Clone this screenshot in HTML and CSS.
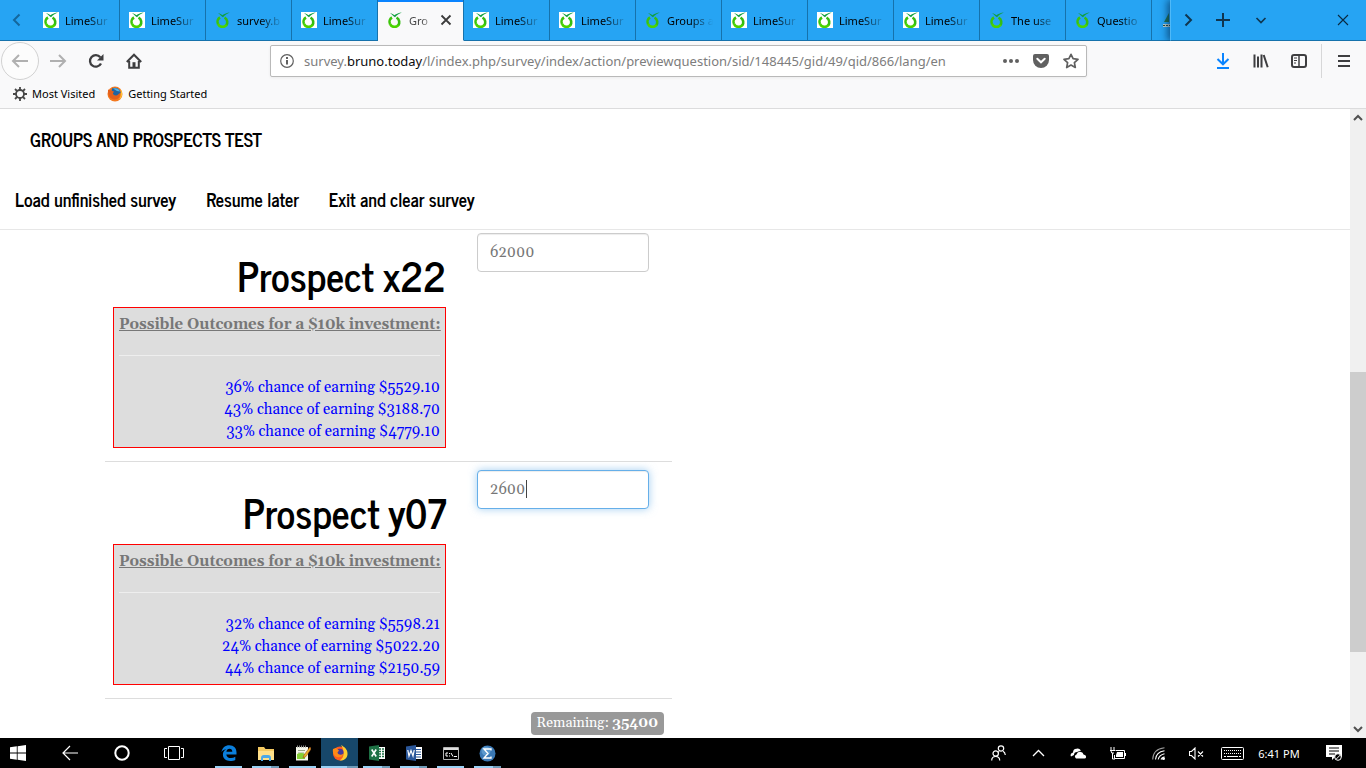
FILE: index.html
```html
<!DOCTYPE html>
<html lang="en">
<head>
<meta charset="utf-8">
<title>Groups and Prospects Test</title>
<link rel="stylesheet" href="styles.css">
</head>
<body>
<svg class="defs" aria-hidden="true">
  <symbol id="lime" viewBox="0 0 16 16">
    <path d="M9.500 5.700a5 5 0 0 1 1.600 7.700" fill="none" stroke="#35bd12" stroke-width="2.600"/>
    <path d="M11.600 12.700a5 5 0 0 1-8.600-.7" fill="none" stroke="#4ad400" stroke-width="2.800"/>
    <path d="M3 12a5 5 0 0 1 2-6.500" fill="none" stroke="#3cc40a" stroke-width="2.600"/>
    <path d="M3 1.200C5 1.400 6.200 2 7.300 3.200 9.400 1.600 12 .7 14.800.4 12 1.600 9.800 3 8 5.200 6.500 4.800 5.400 2.400 3 1.200z" fill="#0f9f3f"/>
  </symbol>
  <symbol id="firefox" viewBox="0 0 16 16">
    <circle cx="8" cy="8" r="7.500" fill="#f4791f"/>
    <path d="M5 2.500A6 6 0 0 1 13.800 6.500L11 10 7 9.500 4.500 6z" fill="#23649f"/>
    <path d="M6 2.500c3-1 6 0 7 3l-3-.5z" fill="#4fb3e8"/>
    <path d="M1 3.500 4 4.500 7 5.500 5.800 7.500c.2 2 3.200 3 5 1.200l2-1.700c1 3-1.300 6.500-5 6.500C3.500 13.500.5 10 1 3.500z" fill="#e4601b"/>
    <path d="M13.500 3c2.500 4 1.800 8.500-1.500 10.800 2.400-3.300 2.200-6.600 1.500-10.800z" fill="#ffd23a"/>
  </symbol>
</svg>

<header class="browser">
  <div class="tabstrip">
    <button class="scroll-left" aria-label="Scroll tabs left"><svg width="16" height="16" viewBox="0 0 16 16"><path d="M10.500 2.500 5 8l5.500 5.500" fill="none" stroke="#14679c" stroke-width="2"/></svg></button>
    <div class="tabs">
      <button class="tab"><svg class="fav boxed"><use href="#lime"/></svg><span class="tab-title">LimeSur</span></button>
      <button class="tab"><svg class="fav boxed"><use href="#lime"/></svg><span class="tab-title">LimeSur</span></button>
      <button class="tab"><svg class="fav"><use href="#lime"/></svg><span class="tab-title">survey.b</span></button>
      <button class="tab"><svg class="fav boxed"><use href="#lime"/></svg><span class="tab-title">LimeSur</span></button>
      <button class="tab active"><svg class="fav"><use href="#lime"/></svg><span class="tab-title">Gro</span><svg class="tab-close" viewBox="0 0 12 12"><path d="M1.500 1.500l9 9m0-9l-9 9" stroke="#3c3c3c" stroke-width="1.800"/></svg></button>
      <button class="tab"><svg class="fav boxed"><use href="#lime"/></svg><span class="tab-title">LimeSur</span></button>
      <button class="tab"><svg class="fav boxed"><use href="#lime"/></svg><span class="tab-title">LimeSur</span></button>
      <button class="tab"><svg class="fav"><use href="#lime"/></svg><span class="tab-title">Groups a</span></button>
      <button class="tab"><svg class="fav boxed"><use href="#lime"/></svg><span class="tab-title">LimeSur</span></button>
      <button class="tab"><svg class="fav boxed"><use href="#lime"/></svg><span class="tab-title">LimeSur</span></button>
      <button class="tab"><svg class="fav boxed"><use href="#lime"/></svg><span class="tab-title">LimeSur</span></button>
      <button class="tab"><svg class="fav"><use href="#lime"/></svg><span class="tab-title">The use</span></button>
      <button class="tab"><svg class="fav"><use href="#lime"/></svg><span class="tab-title">Questio</span></button>
      <button class="tab" aria-label="Tab"><svg class="fav" viewBox="0 0 16 16"><path d="M3 10 8 1v9z" fill="#23704a"/><path d="M2 12h13v3H2z" fill="#c9d6d0"/><path d="M2 13.500h13" stroke="#274b3c" stroke-dasharray="2 1"/></svg></button>
    </div>
    <div class="tab-tools">
      <button class="tool scroll-right" aria-label="Scroll tabs right"><svg width="16" height="16" viewBox="0 0 16 16"><path d="M5.500 2.500 11 8l-5.500 5.500" fill="none" stroke="#10364f" stroke-width="2"/></svg></button>
      <button class="tool" aria-label="New tab"><svg width="16" height="16" viewBox="0 0 16 16"><path d="M8 1v14M1 8h14" stroke="#10364f" stroke-width="2"/></svg></button>
      <button class="tool" aria-label="List all tabs"><svg width="12" height="12" viewBox="0 0 12 12"><path d="M1.500 4 6 8.500 10.500 4" fill="none" stroke="#10364f" stroke-width="1.700"/></svg></button>
      <button class="tool window-close" aria-label="Close window"><svg width="12" height="12" viewBox="0 0 12 12"><path d="M1 1l10 10M11 1 1 11" stroke="#0a2a40" stroke-width="1.100"/></svg></button>
    </div>
  </div>

  <div class="navbar">
    <button class="nav-btn back" aria-label="Back"><svg width="18" height="16" viewBox="0 0 18 16"><path d="M17 8H2M8 2 2 8l6 6" fill="none" stroke="#b0b0b0" stroke-width="2"/></svg></button>
    <button class="nav-btn" aria-label="Forward"><svg width="18" height="16" viewBox="0 0 18 16"><path d="M1 8h15M10 2l6 6-6 6" fill="none" stroke="#b0b0b0" stroke-width="2"/></svg></button>
    <button class="nav-btn" aria-label="Reload"><svg width="16" height="16" viewBox="0 0 16 16"><path d="M13 10.500A5.800 5.800 0 1 1 12.300 4.200" fill="none" stroke="#3e3e40" stroke-width="2.300"/><path d="M15.500 1v6.500H9z" fill="#3e3e40"/></svg></button>
    <button class="nav-btn" aria-label="Home"><svg width="16" height="16" viewBox="0 0 16 16"><path d="M.8 9 8 1.700 15.200 9M3.200 8v6.700h9.600V8" fill="none" stroke="#3e3e40" stroke-width="2"/><path d="M6.500 14V9.200h3V14z" fill="#3e3e40"/></svg></button>
    <div class="urlbar">
      <svg width="16" height="16" viewBox="0 0 16 16"><circle cx="8" cy="8" r="6.300" fill="none" stroke="#606060" stroke-width="1.200"/><path d="M7 7h2v4.500H7zM7 4h2v2H7z" fill="#606060"/></svg>
      <div class="url" role="textbox" contenteditable="true" aria-label="Address">survey.<b class="host">bruno.today</b>/l/index.php/survey/index/action/previewquestion/sid/148445/gid/49/qid/866/lang/en</div>
      <button class="url-btn" aria-label="Page actions"><svg width="16" height="16" viewBox="0 0 16 16"><circle cx="2" cy="8" r="2" fill="#606060"/><circle cx="8" cy="8" r="2" fill="#606060"/><circle cx="14" cy="8" r="2" fill="#606060"/></svg></button>
      <button class="url-btn" aria-label="Save to Pocket"><svg width="16" height="16" viewBox="0 0 16 16"><path d="M2 1h12q2 0 2 2v4a8 8 0 0 1-16 0V3q0-2 2-2z" fill="#606060"/><path d="M4.300 5.700 8 9.300l3.700-3.600" fill="none" stroke="#fff" stroke-width="2" stroke-linecap="round"/></svg></button>
      <button class="url-btn" aria-label="Bookmark this page"><svg width="16" height="16" viewBox="0 0 16 16"><path d="M8 1.300l2.100 4.400 4.900.6-3.600 3.300.9 4.900L8 12.100l-4.300 2.400.9-4.900L1 6.300l4.900-.6z" fill="none" stroke="#606060" stroke-width="1.700" stroke-linejoin="round"/></svg></button>
    </div>
    <button class="nav-btn" aria-label="Downloads"><svg width="16" height="18" viewBox="0 0 16 18"><path d="M8 1v11M2.500 7 8 12.300 13.500 7M2 16h12" fill="none" stroke="#0a84ff" stroke-width="2"/></svg></button>
    <button class="nav-btn" aria-label="Library"><svg width="16" height="16" viewBox="0 0 16 16"><path d="M1.500 1.500v13M5 3.500v11M8.500 1.500v13M10.700 2l4 12.300" stroke="#3e3e40" stroke-width="2"/></svg></button>
    <button class="nav-btn" aria-label="Sidebars"><svg width="16" height="14" viewBox="0 0 16 14"><rect x="1" y="1" width="14" height="12" rx="2" fill="none" stroke="#3e3e40" stroke-width="2"/><path d="M8 1v12" stroke="#3e3e40" stroke-width="1.500"/><path d="M3 4h3M3 6.500h3M3 9h2" stroke="#3e3e40"/></svg></button>
    <span class="nav-sep"></span>
    <button class="nav-btn menu-btn" aria-label="Open menu"><svg width="12" height="12" viewBox="0 0 12 12"><path d="M0 1h12M0 6h12M0 11h12" stroke="#3e3e40" stroke-width="2"/></svg></button>
  </div>

  <nav class="bookmarks" aria-label="Bookmarks">
    <button class="bookmark"><svg width="14" height="14" viewBox="0 0 14 14"><circle cx="7" cy="7" r="4" fill="none" stroke="#474747" stroke-width="1.800"/><path d="M7 0v3M7 11v3M0 7h3M11 7h3M2 2l2.200 2.200M9.800 9.800 12 12M12 2 9.800 4.200M4.200 9.800 2 12" stroke="#474747" stroke-width="1.800"/></svg>Most Visited</button>
    <a class="bookmark" href="#start"><svg width="16" height="16"><use href="#firefox"/></svg>Getting Started</a>
  </nav>
</header>

<div class="viewport">
  <main class="page">
    <div class="site-head">
      <div class="brand">GROUPS AND PROSPECTS TEST</div>
      <nav class="survey-nav">
        <a href="#load">Load unfinished survey</a>
        <a href="#resume">Resume later</a>
        <a href="#exit">Exit and clear survey</a>
      </nav>
    </div>
    <form class="question">
      <div class="row first">
        <label class="prospect" for="x22">
          <span class="name">Prospect x22</span>
          <span class="outcomes">
            <span class="outcomes-title">Possible Outcomes for a $10k investment:</span>
            <span class="rule"></span>
            <span class="line">36% chance of earning $5529.10</span>
            <span class="line">43% chance of earning $3188.70</span>
            <span class="line">33% chance of earning $4779.10</span>
          </span>
        </label>
        <div class="field"><input class="amount" id="x22" type="text" value="62000"></div>
      </div>
      <div class="row">
        <label class="prospect" for="y07">
          <span class="name">Prospect y07</span>
          <span class="outcomes">
            <span class="outcomes-title">Possible Outcomes for a $10k investment:</span>
            <span class="rule"></span>
            <span class="line">32% chance of earning $5598.21</span>
            <span class="line">24% chance of earning $5022.20</span>
            <span class="line">44% chance of earning $2150.59</span>
          </span>
        </label>
        <div class="field"><input class="amount focused" id="y07" type="text" value="2600"><span class="caret"></span></div>
      </div>
      <div class="totals"><output class="remaining">Remaining: <b>35400</b></output></div>
    </form>
  </main>
  <div class="scrollbar" aria-hidden="true">
    <svg width="16" height="17" viewBox="0 0 16 17"><path d="M4 11l4-4 4 4" fill="none" stroke="#505050" stroke-width="2"/></svg>
    <div class="track"><div class="thumb"></div></div>
    <svg width="16" height="17" viewBox="0 0 16 17"><path d="M4 6l4 4 4-4" fill="none" stroke="#505050" stroke-width="2"/></svg>
  </div>
</div>

<footer class="taskbar">
  <button class="start" aria-label="Start"><svg width="16" height="16" viewBox="0 0 16 16"><path d="M0 2.200 6.800 1.300v6.300H0zM7.600 1.200 16 0v7.600H7.600zM0 8.400h6.800v6.300L0 13.800zM7.600 8.400H16V16l-8.400-1.200z" fill="#fff"/></svg></button>
  <button class="shell" aria-label="Back"><svg width="16" height="16" viewBox="0 0 16 16"><path d="M16 8H1M8 1 1 8l7 7" fill="none" stroke="#fff" stroke-width="1.200"/></svg></button>
  <button class="shell" aria-label="Search"><svg width="16" height="16" viewBox="0 0 16 16"><circle cx="8" cy="8" r="6.700" fill="none" stroke="#fff" stroke-width="2"/></svg></button>
  <button class="shell" aria-label="Task view"><svg width="20" height="14" viewBox="0 0 20 14"><path d="M4.500.5h11v13h-11zM3 2.500H.5v9H3M17 2.500h2.500v9H17" fill="none" stroke="#fff"/></svg></button>
  <div class="apps">
    <button class="app" aria-label="Edge"><svg width="16" height="16" viewBox="0 0 16 16"><path d="M.5 7C1.200 2.800 4.200.3 8.300.3c4.500 0 7.200 3 7.200 7.200v1.900H5.300c.2 2.400 2.200 3.600 4.700 3.600 1.600 0 3-.4 4.300-1.200v3.100c-1.400.8-3 1.100-5 1.100-4.400 0-7.400-2.400-7.400-6.400 0-2.400 1.400-4.400 3.600-5.500C3.500 4.500 1.500 5.300.5 7zm4.900-.2h5.900c0-1.900-1-3.100-2.800-3.100-1.700 0-2.800 1.200-3.100 3.100z" fill="#0b7fdc"/></svg></button>
    <button class="app more" aria-label="File Explorer"><svg width="16" height="15" viewBox="0 0 16 15"><path d="M0 1h6l1.500 2H16v11H0z" fill="#f5ca62"/><path d="M0 5h16v9H0z" fill="#ffe08a"/><path d="M3 15v-3q0-3 3-3h4q3 0 3 3v3h-2v-3H5v3z" fill="#4ba8e8"/></svg></button>
    <button class="app" aria-label="Notepad++"><svg width="16" height="16" viewBox="0 0 16 16"><path d="M1 2h12v13.500H1z" fill="#f6f8ec"/><path d="M3 5.500h7M3 8h6M3 10.500h5" stroke="#9aa68a"/><path d="M2 9q4-2 8 0v5H2z" fill="#85cf35"/><path d="M2 1.500h10" stroke="#8c8c8c" stroke-width="2" stroke-dasharray="1 1"/><path d="M15 2 9 10l-1 3 3-1.500L16 4z" fill="#eeb229" stroke="#9b4c20" stroke-width=".6"/></svg></button>
    <button class="app more current" aria-label="Firefox"><svg width="16" height="16" viewBox="0 0 16 16"><circle cx="8" cy="8.500" r="7" fill="#ff5a20"/><path d="M9 0c3.600 2 7 4.700 6.500 9.500C15 14 11 16 7.500 15.500 13 13 12.500 5 9 0z" fill="#ffcb2d"/><circle cx="7.800" cy="7.500" r="3.700" fill="#463b9b"/><path d="M1 4l3-1 3 2.500-1.500 2c.5 2.500 4 3 6 1-1 4-5.500 5-8.500 2.500C1 9 .5 6.500 1 4z" fill="#ff8a16"/></svg></button>
    <button class="app more" aria-label="Excel"><svg width="16" height="16" viewBox="0 0 16 16"><path d="M8 2h8v12H8z" fill="#fff"/><path d="M10 4h2M13 4h2M10 6.500h2M13 6.500h2M10 9h2M13 9h2M10 11.500h2M13 11.500h2" stroke="#1e7145" stroke-width="1.400"/><path d="M0 1.500 10 0v16L0 14.500z" fill="#1e7145"/><path d="M2.700 4.500l4.500 7M7.200 4.500l-4.500 7" stroke="#fff" stroke-width="1.600"/></svg></button>
    <button class="app more" aria-label="Word"><svg width="16" height="16" viewBox="0 0 16 16"><path d="M8 2h8v12H8z" fill="#fff"/><path d="M10 4.500h5M10 7h5M10 9.500h5M10 12h5" stroke="#2b579a"/><path d="M0 1.500 10 0v16L0 14.500z" fill="#2b579a"/><path d="M1.800 5 3 11l2-5.500L7 11l1.200-6" fill="none" stroke="#fff" stroke-width="1.200"/></svg></button>
    <button class="app" aria-label="Command Prompt"><svg width="16" height="13" viewBox="0 0 16 13"><path d="M.5.5h15v12H.5z" fill="#000" stroke="#b5b5b5"/><path d="M1 2h14" stroke="#ddd" stroke-width="2"/><path d="M5 6H3v3h2M6.500 6v1M6.500 8.500v1M8 6l2 3.500M11 9.500h3" fill="none" stroke="#fff"/></svg></button>
    <button class="app more" aria-label="Sigma"><svg width="17" height="17" viewBox="0 0 17 17"><circle cx="8.500" cy="8.500" r="8" fill="#3a78b5"/><circle cx="7" cy="6" r="4.500" fill="#5b98cd"/><path d="M12 5.500V4H5l4 4.500L5 13h7v-1.500" fill="none" stroke="#fff" stroke-width="1.400"/></svg></button>
  </div>
  <div class="tray">
    <button class="tray-btn" aria-label="People"><svg width="15" height="16" viewBox="0 0 15 16"><g fill="none" stroke="#fff" stroke-width="1.200"><circle cx="10" cy="3.500" r="2.700"/><path d="M8 6.300 7 7.500M12 6.300q2 1 2.300 3.700"/><circle cx="4.700" cy="8.500" r="2.700"/><path d="M.7 15.500q0-4 4-4t4 4"/></g></svg></button>
    <button class="tray-btn" aria-label="Show hidden icons"><svg width="13" height="8" viewBox="0 0 13 8"><path d="M1 7l5.500-5.500L12 7" fill="none" stroke="#fff" stroke-width="1.300"/></svg></button>
    <button class="tray-btn" aria-label="OneDrive"><svg width="17" height="11" viewBox="0 0 17 11"><path d="M1 8.500Q-.5 5.500 3 4.500 3 1 6.500.7 9-.2 11 2.500L7 4Q4 4 4 7z" fill="#fff"/><path d="M6 10.500Q3.500 8 6.500 6.500 7.500 3 11 4q2 0 2.500 2.500 3 .5 2.500 3-.2 1-1.500 1z" fill="#fff"/></svg></button>
    <button class="tray-btn" aria-label="Power"><svg width="16" height="13" viewBox="0 0 16 13"><path d="M5.500 3.500h9v8h-10V8" fill="none" stroke="#fff"/><path d="M7 5h6v5H6V8zM15 6h1v3h-1z" fill="#fff"/><path d="M1 0v3M4 0v3M0 3.500h5M1 4q0 3 3 2M2.500 6v6H5" fill="none" stroke="#fff"/></svg></button>
    <button class="tray-btn" aria-label="Network"><svg width="13" height="13" viewBox="0 0 13 13"><g fill="none" stroke="#fff" stroke-width="1.100"><path d="M.7 12.500Q1 2 12.500.7" opacity=".6"/><path d="M3.500 12.500Q4 5 12.500 3.700M6.200 12.500Q7 8 12.500 6.700M9 12.500Q9.500 10.500 12.500 9.700"/></g><circle cx="11.500" cy="11.500" r="1.500" fill="#fff"/></svg></button>
    <button class="tray-btn slim" aria-label="Volume muted"><svg width="15" height="13" viewBox="0 0 15 13"><path d="M.5 4.500h2L6 1v11L2.500 8.500h-2zM9 4.500l5 5M14 4.500l-5 5" fill="none" stroke="#fff" stroke-width="1.100"/></svg></button>
    <button class="tray-btn slim" aria-label="Touch keyboard"><svg width="23" height="13" viewBox="0 0 23 13"><rect x=".5" y=".5" width="22" height="12" rx="1" fill="none" stroke="#fff"/><path d="M3 3.500h17M3 6.500h17" stroke="#fff" stroke-width="1.200" stroke-dasharray="1 1"/><path d="M3 9.500h2M6 9.500h11M18 9.500h2" stroke="#fff"/></svg></button>
    <button class="clock">6:41 PM</button>
    <button class="notices" aria-label="Notifications"><svg width="16" height="16" viewBox="0 0 16 16"><path d="M0 0h16v12H9l-3 3v-3H0z" fill="#fff"/><path d="M3 3h10M3 6h10M3 9h6" stroke="#000" stroke-width="1.200"/><circle cx="12" cy="12" r="3.300" fill="#000" stroke="#fff"/><path d="M10 14.300 14.300 10" stroke="#fff"/></svg></button>
  </div>
</footer>
</body>
</html>
```

FILE: styles.css
```css
* { box-sizing: border-box; }

body {
  margin: 0;
  height: 100vh;
  display: flex;
  flex-direction: column;
  overflow: hidden;
  font-family: "Noto Sans", "Open Sans", sans-serif;
  font-size: 11px;
  color: #000;
  background: #fff;
}

button {
  margin: 0;
  padding: 0;
  border: 0;
  background: none;
  font: inherit;
  color: inherit;
  display: flex;
  align-items: center;
  justify-content: center;
}

svg { flex: none; display: block; }
.defs { position: absolute; width: 0; height: 0; }

/* Tab strip */
.browser {
  flex: none;
  background: #f9f9fa;
  border-bottom: 1px solid #dcdcdd;
}
.tabstrip {
  display: flex;
  height: 41px;
  overflow: hidden;
  background: #26a4f3;
}
.scroll-left {
  width: 34px;
  border-bottom: 1px solid #1672ac;
}
.tabs {
  flex: 1;
  min-width: 0;
  display: flex;
  overflow: hidden;
}
.tab {
  flex: none;
  width: 86px;
  padding: 0 8px 0 9px;
  gap: 6px;
  justify-content: flex-start;
  border-right: 1px solid #1672ac;
  border-bottom: 1px solid #1672ac;
}
.tab.active {
  background: #f9f9fa;
  border-bottom-color: #f9f9fa;
  box-shadow: inset 0 2px #0a84ff;
  color: #444;
}
.fav { width: 16px; height: 16px; }
.boxed { background: #fff; }
.tab-title {
  flex: 1;
  min-width: 0;
  white-space: nowrap;
  text-align: left;
  -webkit-mask-image: linear-gradient(to right, #000 50%, transparent);
  mask-image: linear-gradient(to right, #000 50%, transparent);
}
.tab-close { width: 12px; height: 12px; margin-right: 3px; }
.tab-tools {
  display: flex;
  width: 196px;
  border-left: 1px solid #4fb9f8;
  border-bottom: 1px solid #1672ac;
  box-shadow: -3px 0 7px rgba(0, 40, 80, 0.6);
}
.tool { width: 38px; }
.scroll-right { width: 33px; }
.window-close { width: 46px; margin-left: auto; }

/* Navigation bar */
.navbar {
  display: flex;
  align-items: center;
  height: 40px;
  padding: 0 3px 0 1px;
}
.nav-btn { width: 38px; height: 38px; flex: none; }
.back {
  border: 1px solid #d2d2d2;
  border-radius: 50%;
  background: #fcfcfc;
}
.urlbar {
  flex: 1;
  min-width: 0;
  display: flex;
  align-items: center;
  gap: 14px;
  height: 32px;
  margin: 0 117px;
  padding: 0 7px 0 8px;
  border: 1px solid #b9b9b9;
  border-radius: 2px;
  background: #fff;
  box-shadow: 0 1px 3px rgba(0, 0, 0, 0.06);
}
.url {
  flex: 1;
  min-width: 0;
  margin-left: -5px;
  overflow: hidden;
  white-space: nowrap;
  font-size: 13px;
  color: #7d7d7d;
}
.host { font-weight: 400; color: #0c0c0d; }
.url-btn { width: 16px; height: 16px; }
.nav-sep { width: 1px; height: 34px; margin: 0 3px; background: #d7d7d8; }

.bookmarks {
  display: flex;
  align-items: center;
  gap: 12px;
  height: 27px;
  padding: 0 13px 2px;
}
.bookmark {
  display: flex;
  align-items: center;
  gap: 5px;
  color: #000;
  text-decoration: none;
  white-space: nowrap;
}

/* Survey page */
.viewport {
  flex: 1;
  min-height: 0;
  display: flex;
}
.page {
  flex: 1;
  min-width: 0;
  overflow: hidden;
  color: #777;
  font-family: Georgia, Gelasio, "Liberation Serif", serif;
  font-size: 15px;
}
.site-head {
  height: 121px;
  border-bottom: 1px solid #e7e7e7;
  font-family: "News Cycle", "Liberation Sans Narrow", "Arial Narrow", "Liberation Sans", sans-serif;
  font-size: 18px;
  font-weight: 700;
  color: #000;
}
.brand { padding: 18px 30px 0; line-height: 24px; }
.survey-nav {
  display: flex;
  gap: 30px;
  padding: 36px 15px 0;
  line-height: 24px;
}
.survey-nav a { color: #000; text-decoration: none; }

.question { width: 42%; min-width: 567px; margin-left: 105px; }
.row {
  display: flex;
  gap: 31px;
  padding: 8px 0 13px 8px;
  border-bottom: 1px solid #ddd;
}
.first { padding-top: 3px; }
.prospect {
  width: 333px;
  display: flex;
  flex-direction: column;
  text-align: right;
}
.name {
  padding: 14px 0 4px;
  line-height: 56px;
  font-family: "News Cycle", "Liberation Sans Narrow", "Arial Narrow", "Liberation Sans", sans-serif;
  font-size: 39px;
  font-weight: 700;
  color: #000;
}
.outcomes {
  display: flex;
  flex-direction: column;
  padding: 6px 5px 4px;
  border: 1px solid #f00;
  background: #ddd;
  line-height: 22px;
  white-space: nowrap;
}
.outcomes-title {
  line-height: 21px;
  font-weight: 700;
  text-decoration: underline;
}
.rule { height: 1px; margin: 20px 0 21px; background: #eee; }
.line { color: #00f; }
.field { position: relative; width: 172px; }
.amount {
  display: block;
  width: 100%;
  height: 39px;
  padding: 0 12px;
  border: 1px solid #ccc;
  border-radius: 4px;
  background: #fff;
  box-shadow: inset 0 1px 1px rgba(0, 0, 0, 0.075);
  font: inherit;
  color: #777;
}
.focused {
  border-color: #66afe9;
  outline: 0;
  box-shadow: inset 0 1px 1px rgba(0, 0, 0, 0.075), 0 0 8px rgba(102, 175, 233, 0.6);
}
.caret {
  position: absolute;
  left: 49px;
  top: 10px;
  width: 1px;
  height: 18px;
  background: #444;
}
.totals {
  display: flex;
  justify-content: flex-end;
  padding: 13px 8px 0 0;
}
.remaining {
  padding: 0 6px;
  border-radius: 4px;
  background: #999;
  color: #fff;
  font-size: 14px;
  line-height: 23px;
}

.scrollbar {
  width: 16px;
  display: flex;
  flex-direction: column;
  background: #f0f0f0;
}
.track { flex: 1; display: flex; flex-direction: column; padding-top: 246px; }
.thumb { height: 280px; background: #cdcdcd; }

/* Taskbar */
.taskbar {
  flex: none;
  display: flex;
  height: 30px;
  background: #000;
  color: #fff;
}
.start { width: 36px; margin-right: 8px; }
.shell { width: 52px; }
.apps { display: flex; margin-left: 10px; }
.app {
  position: relative;
  width: 37px;
}
.app::after {
  content: "";
  position: absolute;
  left: 5px;
  right: 5px;
  bottom: 0;
  height: 2px;
  background: #99d1f5;
}
.more::after { background: linear-gradient(to right, #99d1f5 70%, #6f9bb8 70%); }
.current { background: #17476a; }
.current::after { left: 0; right: 0; }
.tray { display: flex; margin-left: auto; }
.tray-btn { width: 40px; }
.slim { width: 36px; }
.clock { width: 58px; }
.notices { width: 52px; margin-right: 6px; }
```
